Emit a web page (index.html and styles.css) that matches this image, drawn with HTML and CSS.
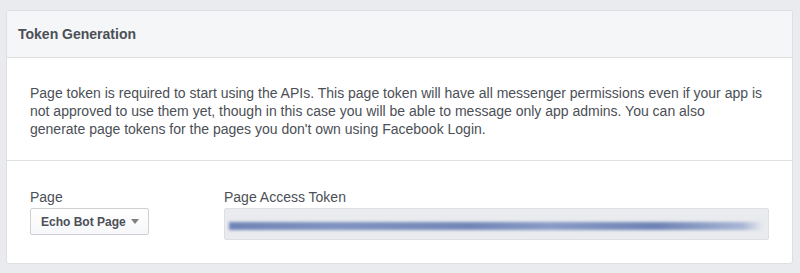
FILE: index.html
```html
<!DOCTYPE html>
<html lang="en">
<head>
  <meta charset="UTF-8"/>
  <title>Token Generation</title>
  <link rel="stylesheet" href="styles.css">
</head>
<body>

  <div class="panel">
    <div class="panel-header">
      <h2>Token Generation</h2>
    </div>
    <div class="panel-intro">
      <p>Page token is required to start using the APIs. This page token will have all messenger permissions even if your app is not approved to use them yet, though in this case you will be able to message only app admins. You can also generate&nbsp;page tokens for the pages you don't own using Facebook Login.</p>
    </div>
    <div class="panel-fields">
      <div class="field field-page">
        <label>Page</label>
        <button class="select-btn">Echo Bot Page <span class="caret"></span></button>
      </div>
      <div class="field field-token">
        <label>Page Access Token</label>
        <div class="token-box">
          <div class="token-blur"></div>
        </div>
      </div>
    </div>
  </div>

</body>
</html>
```

FILE: styles.css
```css
html, body {
  margin: 0;
  padding: 0;
  background-color: #e9ebee;
  font-family: "Liberation Sans", Arial, sans-serif;
  color: #4b4f56;
}

body {
  padding: 10px 8px 8px 6px;
}

.panel {
  background-color: #fff;
  border: 1px solid #dddfe2;
  border-radius: 3px;
  box-sizing: border-box;
  width: 787px;
}

.panel-header {
  background-color: #f5f6f7;
  border-bottom: 1px solid #dddfe2;
  border-radius: 3px 3px 0 0;
  height: 46px;
  padding: 0 11px;
  display: flex;
  align-items: center;
}

.panel-header h2 {
  margin: 0;
  font-size: 14px;
  font-weight: bold;
  color: #4b4f56;
}

.panel-intro {
  padding: 26px 23px 22px;
  border-bottom: 1px solid #dddfe2;
}

.panel-intro p {
  margin: 0;
  max-width: 737px;
  font-size: 14px;
  line-height: 18px;
}

.panel-fields {
  display: flex;
  gap: 75px;
  padding: 27px 23px 23px;
}

.field label {
  display: block;
  font-size: 14px;
  line-height: 18px;
  margin-bottom: 2px;
}

.select-btn {
  font-family: inherit;
  font-size: 12px;
  font-weight: bold;
  color: #4b4f56;
  background: linear-gradient(#fff, #f6f7f9);
  border: 1px solid #ced0d4;
  border-radius: 2px;
  height: 27px;
  width: 119px;
  padding: 0 0 0 10px;
  white-space: nowrap;
  display: flex;
  align-items: center;
  gap: 5px;
}

.caret {
  display: inline-block;
  width: 0;
  height: 0;
  border-left: 4px solid transparent;
  border-right: 4px solid transparent;
  border-top: 5px solid #7f7f7f;
}

.field-token {
  flex: 1;
}

.token-box {
  height: 32px;
  box-sizing: border-box;
  background-color: #e9ebee;
  border: 1px solid #dddfe2;
  border-radius: 2px;
  display: flex;
  align-items: center;
  padding: 0 4px;
  overflow: hidden;
}

.token-blur {
  flex: 1;
  height: 8px;
  background: linear-gradient(90deg, #6f84b6, #8093c0 20%, #7186b7 45%, #899bc6 60%, #6d82b4 80%, #a9b6d4 96%, #e9ebee);
  filter: blur(1.5px);
  margin-top: 3px;
}
```
